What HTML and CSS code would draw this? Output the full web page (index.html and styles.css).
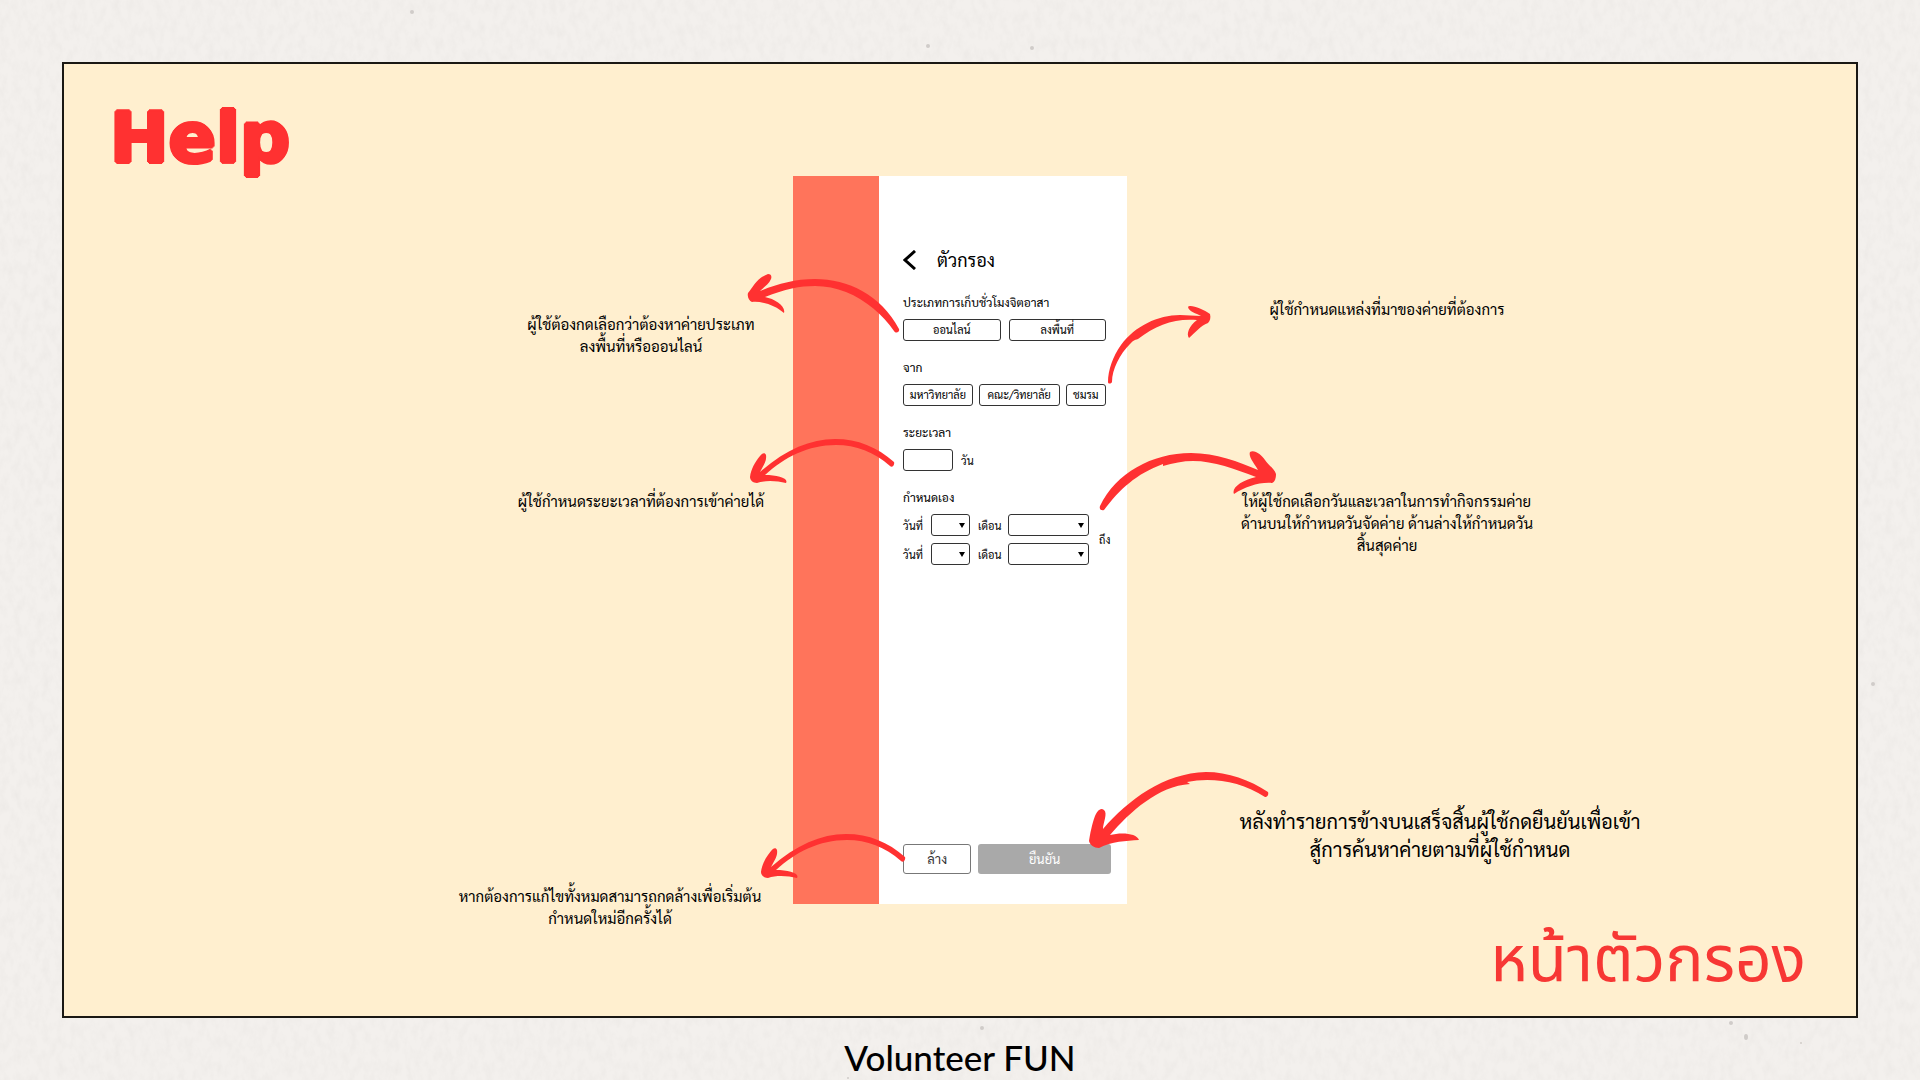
FILE: index.html
```html
<!DOCTYPE html>
<html lang="th">
<head>
<meta charset="utf-8">
<meta name="viewport" content="width=device-width, initial-scale=1">
<title>Volunteer FUN – หน้าตัวกรอง</title>
<link rel="stylesheet" href="styles.css">
</head>
<body>
<svg class="paper" aria-hidden="true">
  <filter id="grain" x="0" y="0" width="100%" height="100%">
    <feTurbulence type="fractalNoise" baseFrequency="0.14 0.08" numOctaves="4" seed="7"/>
    <feColorMatrix values="0 0 0 0 .45  0 0 0 0 .43  0 0 0 0 .41  .16 0 0 0 -.06"/>
  </filter>
  <rect width="100%" height="100%" filter="url(#grain)"/>
  <g class="specks">
    <circle cx="928" cy="46" r="2"/><circle cx="1032" cy="48" r="2"/><circle cx="412" cy="12" r="2"/>
    <circle cx="1731" cy="1023" r="2"/><ellipse cx="1746" cy="1037" rx="2" ry="3"/><circle cx="1801" cy="1043" r="1"/>
    <circle cx="982" cy="1028" r="2"/><circle cx="1873" cy="684" r="2"/><circle cx="848" cy="1078" r="1"/>
  </g>
</svg>
<main class="board">
  <h1 class="title">Help</h1>

  <div class="notes notes-left">
    <p class="note">ผู้ใช้ต้องกดเลือกว่าต้องหาค่ายประเภท<br>ลงพื้นที่หรือออนไลน์</p>
    <p class="note">ผู้ใช้กำหนดระยะเวลาที่ต้องการเข้าค่ายได้</p>
    <p class="note note-clear">หากต้องการแก้ไขทั้งหมดสามารถกดล้างเพื่อเริ่มต้น<br>กำหนดใหม่อีกครั้งได้</p>
  </div>

  <section class="phone">
    <form class="filter">
      <header class="filter-head">
        <button class="back" type="button" aria-label="กลับ">
          <svg viewBox="0 0 14 20"><path d="M12 1 2 10l10 9"/></svg>
        </button>
        <h2>ตัวกรอง</h2>
      </header>
      <div class="group">
        <h3>ประเภทการเก็บชั่วโมงจิตอาสา</h3>
        <div class="row halves">
          <button type="button">ออนไลน์</button>
          <button type="button">ลงพื้นที่</button>
        </div>
      </div>
      <div class="group">
        <h3>จาก</h3>
        <div class="row sources">
          <button type="button">มหาวิทยาลัย</button>
          <button type="button">คณะ/วิทยาลัย</button>
          <button type="button">ชมรม</button>
        </div>
      </div>
      <div class="group">
        <h3><label for="days">ระยะเวลา</label></h3>
        <div class="row">
          <input class="days" id="days" type="text">
          <label for="days">วัน</label>
        </div>
      </div>
      <div class="group">
        <h3>กำหนดเอง</h3>
        <div class="range">
          <div class="dates">
            <label for="d1">วันที่</label><span class="pick"><select id="d1"></select></span>
            <label for="m1">เดือน</label><span class="pick"><select id="m1"></select></span>
            <label for="d2">วันที่</label><span class="pick"><select id="d2"></select></span>
            <label for="m2">เดือน</label><span class="pick"><select id="m2"></select></span>
          </div>
          <span>ถึง</span>
        </div>
      </div>
      <footer class="actions">
        <button class="clear" type="reset">ล้าง</button>
        <button class="confirm" type="button">ยืนยัน</button>
      </footer>
    </form>
    <svg class="arrows" viewBox="793 176 334 728" aria-hidden="true">
      <path d="M899 329C881 295 848 279 815 279C795 279 777 284 760 291C764 287 769 284 771 279C772 276 771 274 768 274C757 278 753 287 748 293C747 297 749 301 752 302C764 301 776 306 784 313C786 306 775 299 765 297C785 289 800 286 815 286C826 286 836 288 846 292C866 300 883 315 894 331C896 334 900 332 899 329Z"/>
      <g id="sweep">
        <path d="M894 462C877 447 858 439 835 439C810 439 785 450 760 472C763 466 767 461 766 455C765 452 762 453 760 456C755 462 751 469 750 477C750 480 753 483 757 483C766 480 777 481 786 483C789 478 777 475 765 475C785 457 808 445 836 445C856 445 874 452 890 466C892 468 895 465 894 462Z"/>
      </g>
      <use href="#sweep" x="11" y="395"/>
      <path d="M1108 382C1108 370 1113 356 1121 345C1135 326 1158 315 1180 315C1187 315 1194 316 1201 316C1196 313 1189 312 1188 307C1190 304 1203 309 1210 314C1211 318 1210 321 1208 323C1200 326 1196 332 1189 338C1186 334 1189 326 1197 320C1175 318 1156 325 1138 339C1134 340 1133 341 1130 344C1120 354 1112 369 1112 382C1111 384 1108 384 1108 382Z"/>
      <path d="M1100 506C1116 473 1152 453 1191 453C1216 453 1239 462 1258 470C1255 464 1248 457 1250 452C1254 449 1262 455 1265 460C1268 465 1274 468 1276 474C1276 478 1275 482 1272 483C1259 482 1245 487 1234 494C1231 488 1242 480 1256 477C1235 469 1214 461 1193 461C1183 461 1173 463 1163 466V464C1136 474 1120 489 1104 510C1101 511 1099 509 1100 506Z"/>
      <path d="M1268 792C1250 780 1228 772 1206 772C1164 773 1128 800 1103 829C1103 823 1108 813 1104 810C1100 807 1097 812 1095 816C1092 824 1090 834 1089 841C1090 845 1094 848 1099 848C1112 841 1126 841 1139 840C1137 833 1121 832 1110 835C1130 812 1158 786 1190 784L1187 782C1211 777 1241 781 1265 797C1267 797 1269 795 1268 792Z"/>
    </svg>
  </section>

  <div class="notes notes-right">
    <p class="note">ผู้ใช้กำหนดแหล่งที่มาของค่ายที่ต้องการ</p>
    <p class="note">ให้ผู้ใช้กดเลือกวันและเวลาในการทำกิจกรรมค่าย<br>ด้านบนให้กำหนดวันจัดค่าย ด้านล่างให้กำหนดวัน<br>สิ้นสุดค่าย</p>
    <p class="note note-confirm">หลังทำรายการข้างบนเสร็จสิ้นผู้ใช้กดยืนยันเพื่อเข้า<br>สู้การค้นหาค่ายตามที่ผู้ใช้กำหนด</p>
  </div>

  <h2 class="page-name">หน้าตัวกรอง</h2>
</main>
<footer class="brand">Volunteer FUN</footer>
</body>
</html>
```
FILE: styles.css
```css
* { box-sizing: border-box; }

body {
  margin: 0;
  min-height: 100vh;
  display: flex;
  flex-direction: column;
  padding: 62px 62px 0;
  background: #f3f0ed;
  color: #000;
  font-family: "Sarabun", "Noto Sans Thai Looped", "Loma", "Noto Sans Thai", "Noto Sans", sans-serif;
}

h1, h2, h3, p { margin: 0; font-weight: 400; }

button, input, select { font: inherit; color: inherit; }

.paper {
  position: absolute;
  inset: 0;
  width: 100%;
  height: 100%;
  z-index: -1;
}
.specks { fill: #d0ccc9; }

.board {
  flex: 1;
  display: grid;
  grid-template-columns: 1fr 334px 1fr;
  grid-template-rows: minmax(112px, 1fr) auto minmax(112px, 1fr);
  border: 2px solid #1a1814;
  background: #ffefcf;
}

/* The ring of shadows thickens the letters and rounds their corners. */
.title {
  grid-area: 1 / 1;
  padding: 36px 0 0 46px;
  color: #ff3131;
  font: 700 70px/76px "DejaVu Sans", sans-serif;
  text-shadow: 2px 0, -2px 0, 0 2px, 0 -2px, 1px 1px, -1px 1px, 1px -1px, -1px -1px;
}

.notes { grid-row: 2 / span 2; display: flex; flex-direction: column; }
.note { font-size: 15px; line-height: 22px; text-align: center; }

.notes-left { grid-column: 1; align-items: flex-end; padding-top: 137px; }
.notes-left .note { width: 304px; margin-bottom: 133px; white-space: nowrap; }
.notes-left .note-clear { width: 366px; margin: 240px 0 0; }

.notes-right { grid-column: 3; padding-top: 122px; }
.notes-right .note { width: 520px; margin-bottom: 170px; }
.notes-right .note-confirm { width: 626px; margin: 81px 0 0; font-size: 20px; line-height: 28px; }

.phone {
  grid-area: 2 / 2;
  position: relative;
  display: flex;
  min-height: 728px;
  border-left: 86px solid #ff745b;
  background: #fff;
}

.filter {
  flex: 1;
  display: flex;
  flex-direction: column;
  gap: 19px;
  padding: 72px 16px 30px 24px;
  font-size: 11px;
}

.filter-head { display: flex; align-items: center; gap: 20px; height: 24px; margin-bottom: 4px; }
.filter-head h2 { font-size: 18px; line-height: 24px; }
.back { width: 14px; height: 20px; padding: 0; border: 0; background: none; }
.back svg { display: block; fill: none; stroke: #000; stroke-width: 3px; }

.group h3 { height: 24px; font-size: 12px; line-height: 14px; white-space: nowrap; }

.row { display: flex; align-items: center; gap: 8px; margin-right: 5px; }
.row button, .clear, .confirm, .days, .pick select {
  height: 22px;
  padding: 0;
  border: 1px solid #333;
  border-radius: 3px;
  background: #fff;
  line-height: 18px;
  white-space: nowrap;
}
.halves button { flex: 1; }
.sources { display: grid; grid-template-columns: 69fr 80fr 40fr; gap: 6px; }
.days { width: 50px; }

.range { display: flex; align-items: center; gap: 10px; white-space: nowrap; }
.dates {
  display: grid;
  grid-template-columns: 20px 39px 22px 81px;
  column-gap: 8px;
  row-gap: 7px;
  align-items: center;
}
.pick { position: relative; display: flex; }
.pick select { appearance: none; width: 100%; }
.pick::after {
  content: "";
  position: absolute;
  right: 5px;
  top: 9px;
  border: 3px solid transparent;
  border-top: 5px solid #000;
  border-bottom: 0;
  pointer-events: none;
}

.actions { display: flex; gap: 7px; margin-top: auto; }
.actions button { height: 30px; font-size: 13px; }
.actions .clear { flex: 1; border-color: #777; color: #333; }
.actions .confirm { flex: 2; border: 0; background: #a9a9a9; color: #fff; }

.arrows {
  position: absolute;
  top: 0;
  left: -86px;
  width: 334px;
  height: 728px;
  overflow: visible;
  fill: #ff3131;
  pointer-events: none;
}

.page-name {
  grid-area: 3 / 3;
  justify-self: end;
  padding: 16px 50px 0 0;
  color: #f73734;
  font: 400 64px/84px "Noto Sans Thai", "Noto Sans", sans-serif;
}

.brand { height: 62px; text-align: center; font: 500 35px/78px Lato, sans-serif; }
```
